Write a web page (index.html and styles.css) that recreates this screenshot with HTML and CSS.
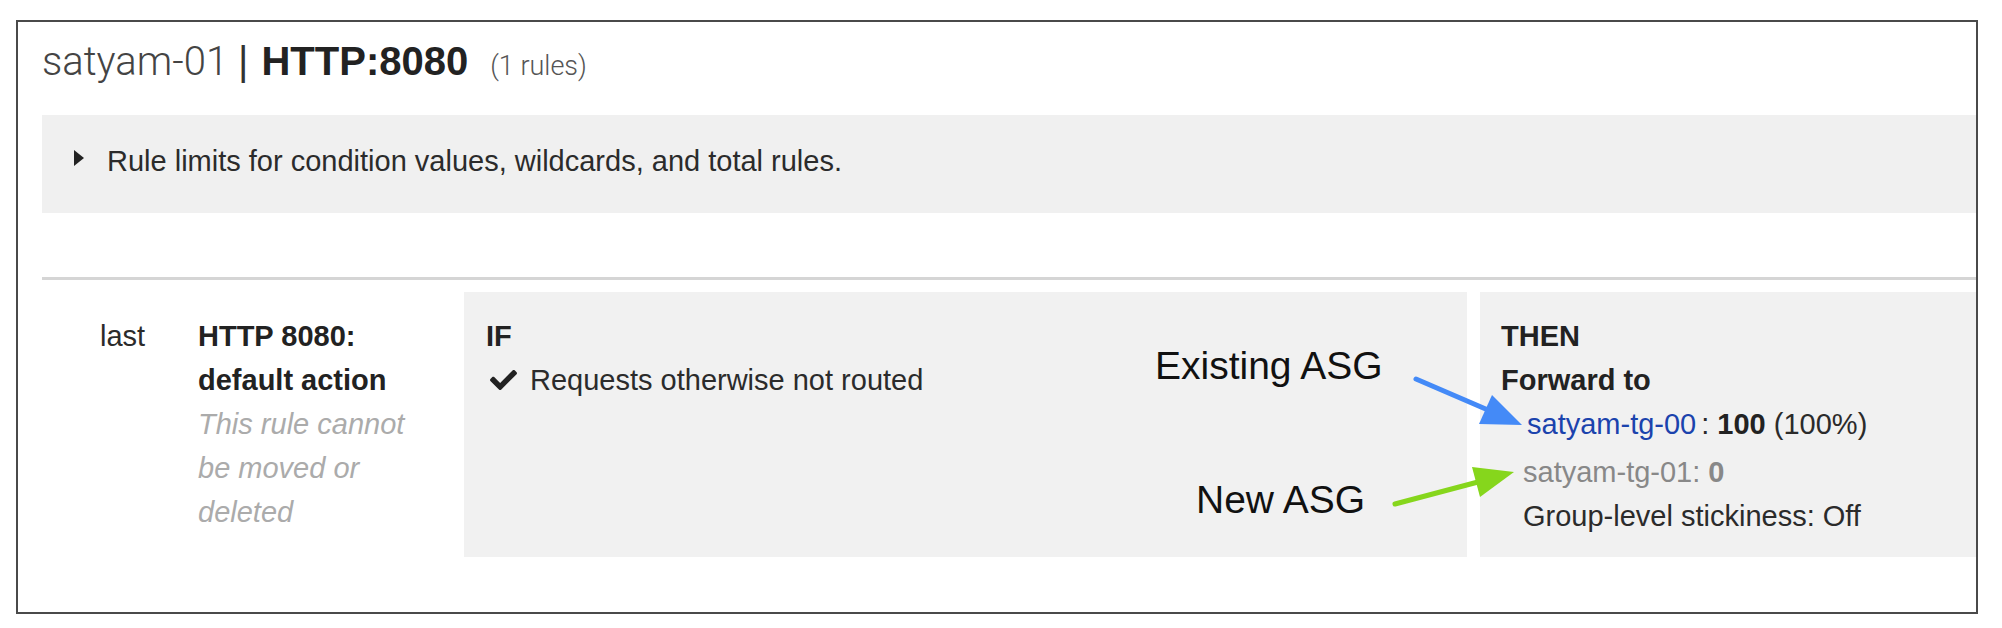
FILE: index.html
```html
<!DOCTYPE html>
<html lang="en">
<head>
<meta charset="utf-8">
<title>satyam-01 | HTTP:8080</title>
<link rel="stylesheet" href="styles.css">
</head>
<body>
<div class="card">
  <h1 class="title"><span class="lb">satyam-01</span><span class="sep">|</span><span class="listener">HTTP:8080</span><span class="count">(1 rules)</span></h1>
  <div class="limits"><span class="caret"></span><span>Rule limits for condition values, wildcards, and total rules.</span></div>
  <div class="divider"></div>
  <div class="rule">
    <div class="prio">last</div>
    <div class="name">
      <div class="rname">HTTP 8080:<br>default action</div>
      <div class="note">This rule cannot be moved or deleted</div>
    </div>
    <div class="panel cond">
      <div class="head">IF</div>
      <div class="check-line">
        <svg class="check" viewBox="0 64 512 384" aria-hidden="true"><path d="M173.9 439.4l-166.4-166.4c-10-10-10-26.2 0-36.2l36.2-36.2c10-10 26.2-10 36.2 0L192 312.7 432.1 72.6c10-10 26.2-10 36.2 0l36.2 36.2c10 10 10 26.2 0 36.2l-294.4 294.4c-10 10-26.2 10-36.2 0z"/></svg>
        <span>Requests otherwise not routed</span>
      </div>
    </div>
    <div class="panel action">
      <div class="head">THEN</div>
      <div class="head">Forward to</div>
      <div class="targets">
        <div class="tg"><a class="tg-link" href="#">satyam-tg-00</a>: <b>100</b> (100%)</div>
        <div class="tg muted">satyam-tg-01: <b>0</b></div>
        <div class="tg">Group-level stickiness: Off</div>
      </div>
    </div>
  </div>
</div>
<svg class="annot" viewBox="0 0 2002 628" aria-hidden="false">
  <text class="annot-label" x="1155" y="379">Existing ASG</text>
  <text class="annot-label" x="1196" y="513">New ASG</text>
  <line class="arrow-blue" x1="1416" y1="379" x2="1488" y2="410"/>
  <polygon class="head-blue" points="1522,425 1492,395 1479,424"/>
  <line class="arrow-green" x1="1395" y1="504" x2="1478" y2="482"/>
  <polygon class="head-green" points="1514,472 1472,467 1480,497"/>
</svg>
</body>
</html>
```

FILE: styles.css
```css
html, body {
  margin: 0;
  padding: 0;
  background: #ffffff;
}

body {
  width: 2002px;
  height: 628px;
  overflow: hidden;
  font-family: "Liberation Sans", Arial, Helvetica, sans-serif;
  font-size: 29px;
  color: #333333;
}

.card {
  box-sizing: border-box;
  width: 1962px;
  height: 594px;
  margin: 20px 0 0 16px;
  border: 2px solid #4a4a4a;
  padding-left: 24px;
  overflow: hidden;
}

.title {
  margin: 0;
  box-sizing: border-box;
  height: 65px;
  padding-top: 15px;
  display: flex;
  align-items: baseline;
  font-size: 40px;
  line-height: 48px;
  font-weight: normal;
  white-space: nowrap;
}

.lb {
  font-family: Roboto, "Liberation Sans", sans-serif;
  font-weight: 300;
  color: #444444;
}

.sep {
  font-family: "Liberation Sans", sans-serif;
  color: #333333;
  margin: 0 13px 0 10px;
}

.listener {
  font-weight: bold;
  color: #222222;
}

.count {
  font-family: Roboto, "Liberation Sans", sans-serif;
  font-weight: 300;
  font-size: 27px;
  color: #555555;
  margin-left: 22px;
}

.limits {
  margin-top: 28px;
  height: 98px;
  box-sizing: border-box;
  padding: 24px 0 0 32px;
  line-height: 44px;
  background: #f0f0f0;
  color: #2b2b2b;
  display: flex;
  align-items: flex-start;
}

.caret {
  width: 0;
  height: 0;
  border-left: 10px solid #222222;
  border-top: 8px solid transparent;
  border-bottom: 8px solid transparent;
  margin: 11px 23px 0 0;
}

.divider {
  margin-top: 64px;
  height: 3px;
  background: #d5d5d5;
}

.rule {
  display: flex;
  padding-top: 12px;
  line-height: 44px;
}

.prio {
  box-sizing: border-box;
  width: 156px;
  padding: 22px 0 0 58px;
  color: #2b2b2b;
}

.name {
  width: 230px;
  margin-right: 36px;
  padding-top: 22px;
}

.rname {
  font-weight: bold;
  color: #222222;
}

.note {
  font-style: italic;
  color: #ababab;
}

.panel {
  box-sizing: border-box;
  background: #f1f1f1;
  height: 265px;
}

.cond {
  width: 1003px;
  padding: 22px 22px 0 22px;
}

.action {
  flex: 1;
  margin-left: 13px;
  padding: 22px 21px 0 21px;
}

.head {
  font-weight: bold;
  color: #222222;
}

.check-line {
  display: flex;
  align-items: center;
  color: #2b2b2b;
}

.check {
  width: 27px;
  height: 22px;
  fill: #222222;
  margin: 0 13px 0 4px;
}

.targets {
  padding-left: 22px;
}

.tg {
  color: #2b2b2b;
}

.tg b {
  color: #222222;
}

.muted {
  margin-top: 4px;
}

.tg-link {
  color: #1b43ad;
  text-decoration: none;
  padding: 0 5px 0 4px;
}

.muted,
.muted b {
  color: #888888;
}

.annot {
  position: absolute;
  left: 0;
  top: 0;
  width: 2002px;
  height: 628px;
  pointer-events: none;
}

.annot-label {
  font-family: "Liberation Sans", Arial, sans-serif;
  font-size: 39px;
  fill: #111111;
}

.arrow-blue {
  stroke: #448af7;
  stroke-width: 5;
  stroke-linecap: round;
}

.head-blue {
  fill: #448af7;
}

.arrow-green {
  stroke: #86d61c;
  stroke-width: 5;
  stroke-linecap: round;
}

.head-green {
  fill: #86d61c;
}
```
